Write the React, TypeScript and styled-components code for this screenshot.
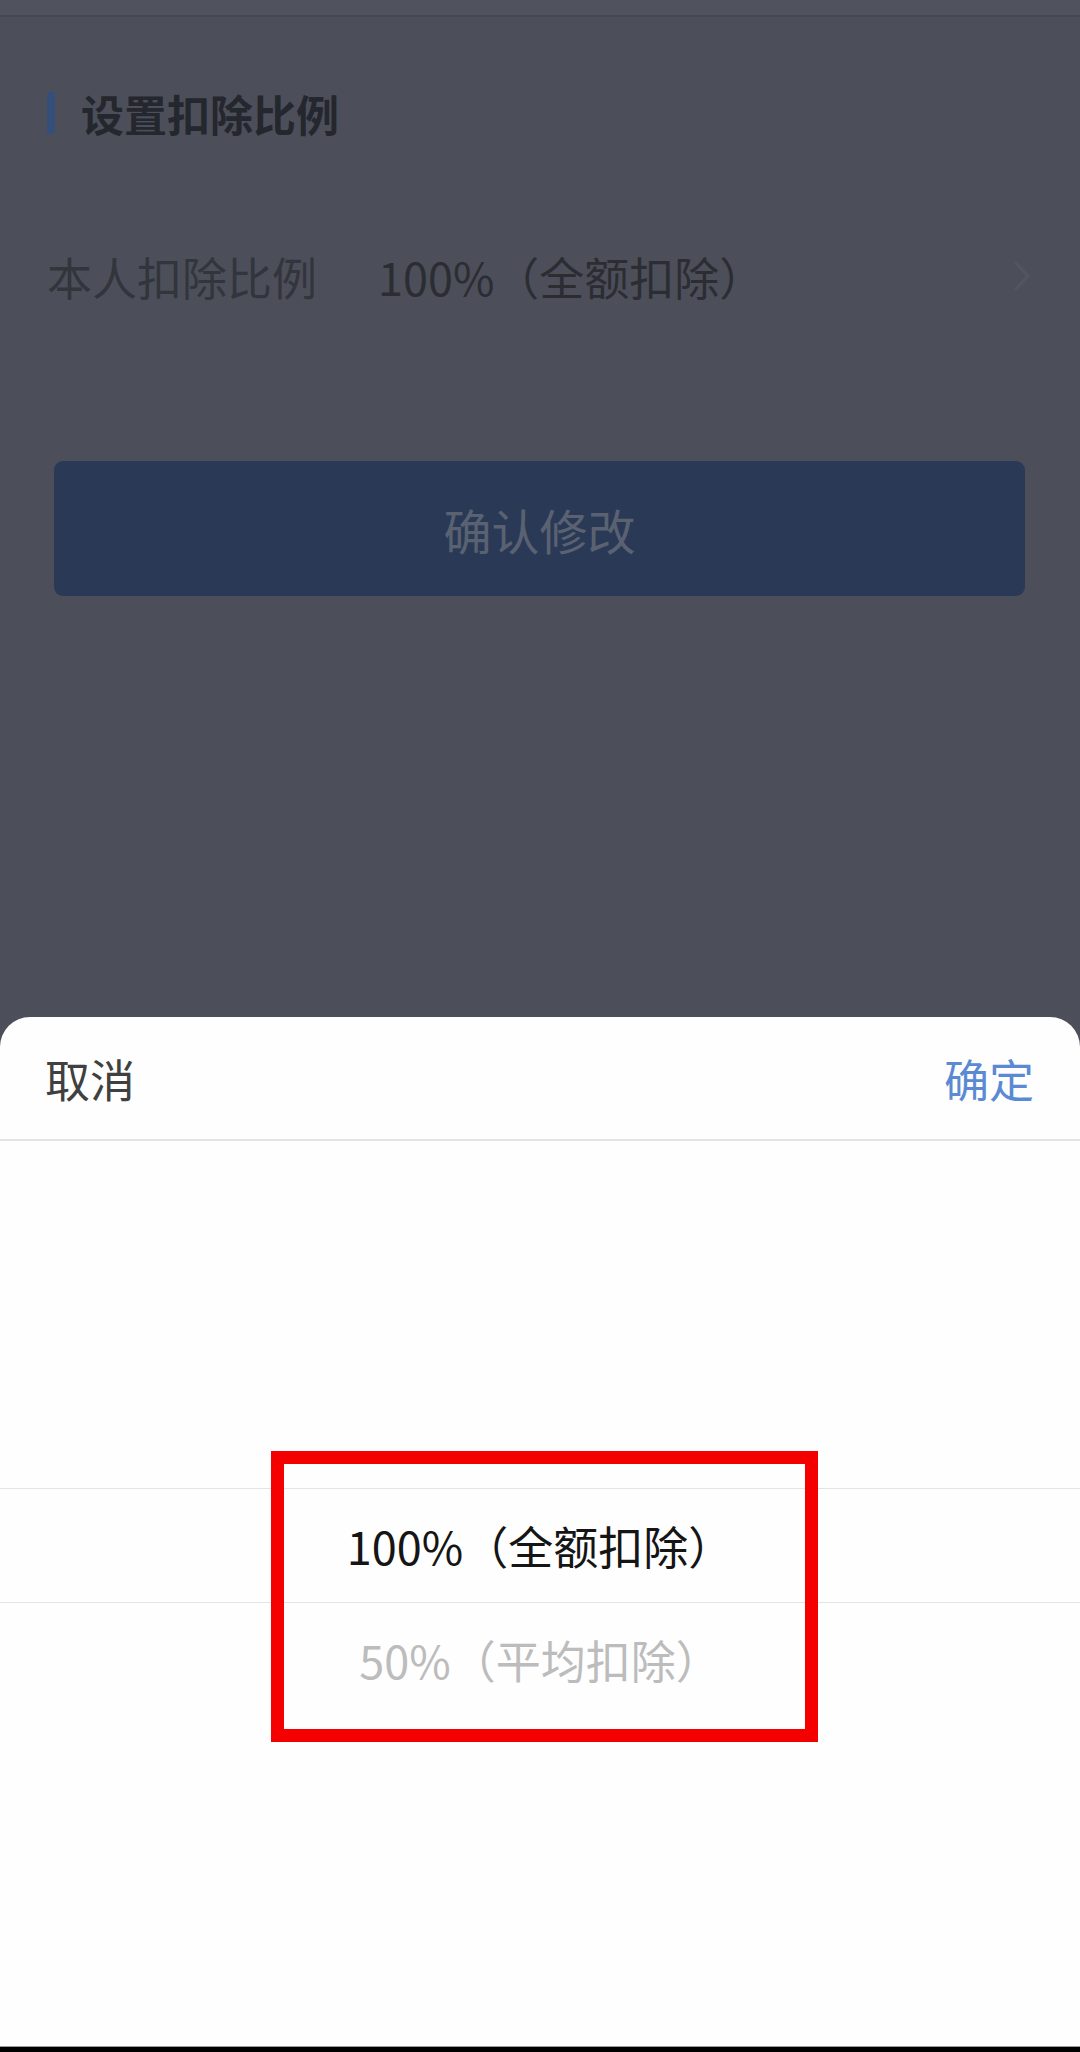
import * as React from 'react'
import styled, { createGlobalStyle } from 'styled-components'

const GlobalStyle = createGlobalStyle`
  html, body {
    margin: 0;
    padding: 0;
    background: #4c4f5a;
  }
  body {
    font-family: "Noto Sans CJK SC", "Noto Sans", sans-serif;
  }
`

const Screen = styled.div`
  position: relative;
  width: 1080px;
  height: 2052px;
  display: flex;
  flex-direction: column;
  overflow: hidden;
  background: #4c4f5a;
`

const TopStrip = styled.div`
  height: 15px;
  background: #50535d;
  border-bottom: 2px solid #454851;
`

const Section = styled.div`
  padding: 75px 47px 0 47px;
  display: flex;
  flex-direction: column;
`

const SectionTitle = styled.div`
  display: flex;
  align-items: center;
  gap: 26px;
  height: 42px;
  font-size: 43px;
  font-weight: 700;
  line-height: 42px;
  color: #25272e;
`

const TitleMark = styled.span`
  width: 8px;
  height: 42px;
  border-radius: 2px;
  background: #34507a;
`

const Row = styled.div`
  margin-top: 99px;
  height: 86px;
  display: flex;
  align-items: center;
  font-size: 45px;
  line-height: 1;
`

const RowLabel = styled.span`
  color: #33353c;
  width: 331px;
`

const RowValue = styled.span`
  flex: 1;
  color: #2b2d33;
`

const Chevron = styled.svg`
  width: 22px;
  height: 36px;
`

const ConfirmButton = styled.div`
  margin: 142px 55px 0 54px;
  height: 135px;
  border-radius: 9px;
  background: #2a3a56;
  display: flex;
  align-items: center;
  justify-content: center;
  font-size: 48px;
  color: #5a6272;
`

const Spacer = styled.div`
  flex: 1;
`

const Sheet = styled.div`
  height: 1029px;
  background: #fefefe;
  border-radius: 30px 30px 0 0;
  display: flex;
  flex-direction: column;
`

const SheetHeader = styled.div`
  height: 122px;
  border-bottom: 2px solid #e3e3e3;
  padding: 0 46px 0 45px;
  display: flex;
  align-items: center;
  justify-content: space-between;
  font-size: 45px;
`

const HeaderAction = styled.span<{ $primary?: boolean }>`
  color: ${(p) => (p.$primary ? '#5b8ad4' : '#404040')};
`

const Picker = styled.div`
  flex: 1;
  padding-top: 347px;
  display: flex;
  flex-direction: column;
`

const PickerItem = styled.div<{ $selected?: boolean }>`
  height: 113px;
  display: flex;
  align-items: center;
  justify-content: center;
  font-size: 45px;
  color: ${(p) => (p.$selected ? '#151515' : '#bcbcbc')};
  border-top: ${(p) => (p.$selected ? '1px solid #e4e4e4' : 'none')};
  border-bottom: ${(p) => (p.$selected ? '1px solid #e4e4e4' : 'none')};
`

const HomeBar = styled.div`
  height: 5px;
  background: #000;
  border-top: 1px solid #9a9a9a;
`

const Highlight = styled.div`
  position: absolute;
  left: 271px;
  top: 1451px;
  width: 547px;
  height: 291px;
  box-sizing: border-box;
  border: 13px solid #f50000;
  pointer-events: none;
`

const options = [
  { label: '100%（全额扣除）', selected: true },
  { label: '50%（平均扣除）', selected: false }
]

export default function App () {
  return (
    <Screen>
      <GlobalStyle />
      <TopStrip />
      <Section>
        <SectionTitle>
          <TitleMark />
          设置扣除比例
        </SectionTitle>
        <Row>
          <RowLabel>本人扣除比例</RowLabel>
          <RowValue>100%（全额扣除）</RowValue>
          <Chevron viewBox='0 0 22 36'>
            <path d='M4 4 L17 18 L4 32' fill='none' stroke='#53565f' strokeWidth='3' />
          </Chevron>
        </Row>
      </Section>
      <ConfirmButton>确认修改</ConfirmButton>
      <Spacer />
      <Sheet>
        <SheetHeader>
          <HeaderAction>取消</HeaderAction>
          <HeaderAction $primary>确定</HeaderAction>
        </SheetHeader>
        <Picker>
          {options.map((o) => (
            <PickerItem key={o.label} $selected={o.selected}>{o.label}</PickerItem>
          ))}
        </Picker>
      </Sheet>
      <HomeBar />
      <Highlight />
    </Screen>
  )
}
